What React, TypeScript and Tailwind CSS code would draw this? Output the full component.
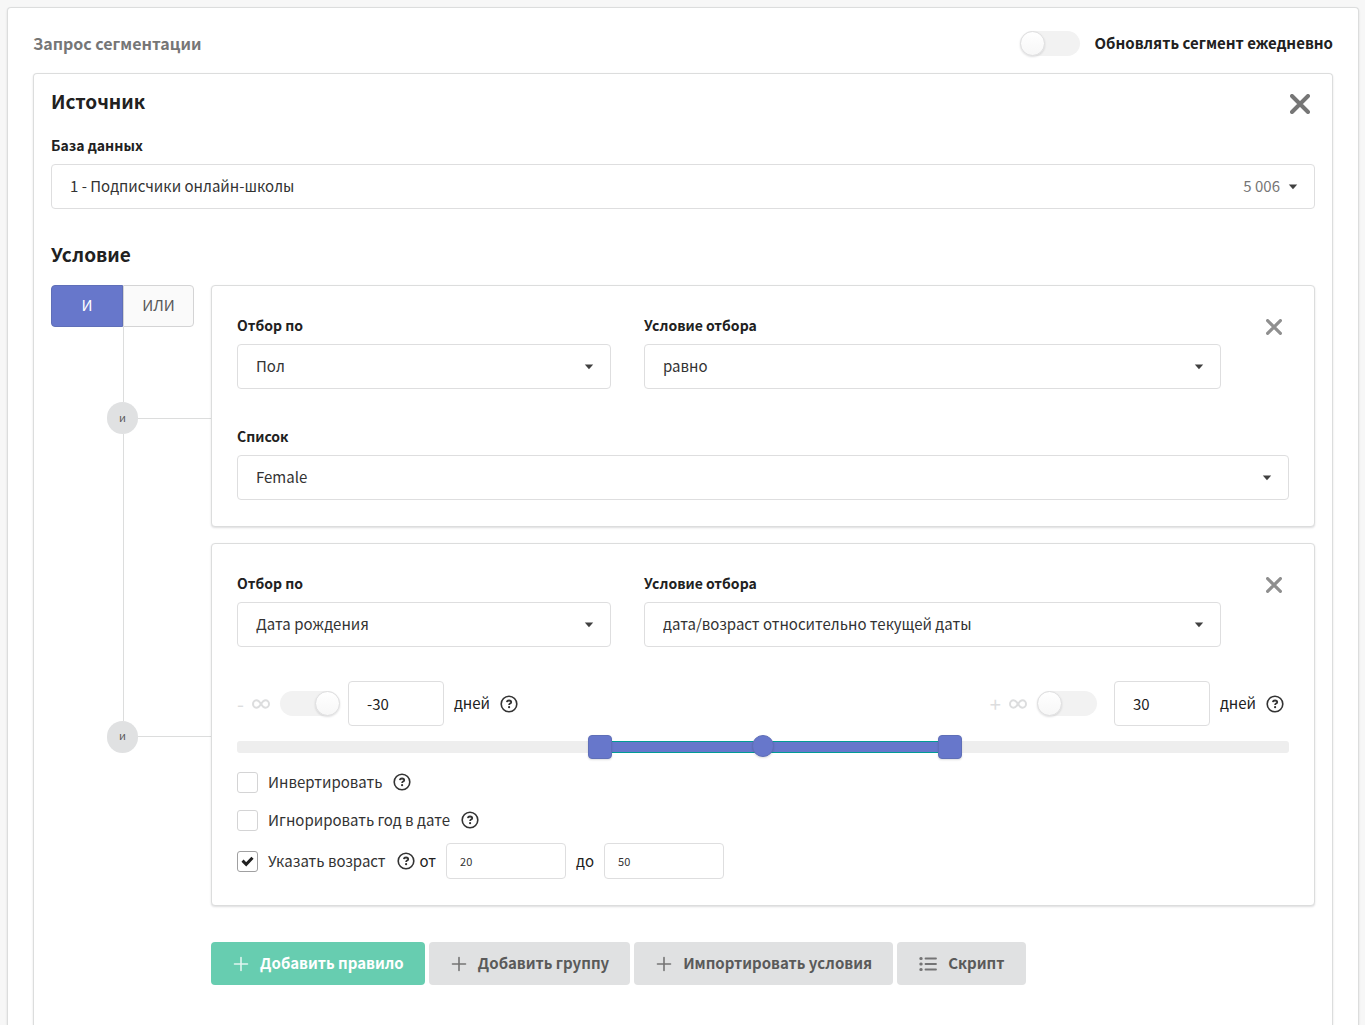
import { useState } from "react";
import type { ReactNode } from "react";

const DAYS_LIMIT = 90;

const thumb =
  "[&::-webkit-slider-thumb]:appearance-none [&::-webkit-slider-thumb]:pointer-events-auto [&::-webkit-slider-thumb]:cursor-pointer [&::-webkit-slider-thumb]:bg-[#6777cb] [&::-webkit-slider-thumb]:border [&::-webkit-slider-thumb]:border-[#5f6fb8] [&::-webkit-slider-thumb]:shadow-[0_1px_2px_rgba(34,36,38,0.15)]";
const squareThumb =
  "[&::-webkit-slider-thumb]:size-6 [&::-webkit-slider-thumb]:rounded";
const roundThumb =
  "[&::-webkit-slider-thumb]:size-[22px] [&::-webkit-slider-thumb]:rounded-full";

function CloseButton({ label, large }: { label: string; large?: boolean }) {
  return (
    <button
      aria-label={label}
      className={`flex w-[30px] items-center justify-center ${
        large ? "h-7 text-[#767676]" : "h-[22px] text-[#8f8f8f]"
      }`}
    >
      <svg
        viewBox="0 0 20 20"
        className={large ? "size-5 shrink-0" : "size-4 shrink-0"}
        fill="none"
        stroke="currentColor"
        strokeWidth="4"
        strokeLinecap="round"
      >
        <path d="M2 2l16 16M18 2L2 18" />
      </svg>
    </button>
  );
}

function HelpIcon() {
  return (
    <svg viewBox="0 0 18 18" className="size-[18px] shrink-0 text-[#333333]" fill="none" stroke="currentColor">
      <circle cx="9" cy="9" r="7.8" strokeWidth="1.6" />
      <path d="M6.8 7.2c.2-1.1 1-1.7 2.200-1.700s2.200.7 2.200 1.700c0 1.400-2.100 1.400-2.100 2.700" strokeWidth="1.8" />
      <circle cx="9.100" cy="12.200" r="1.100" fill="currentColor" stroke="none" />
    </svg>
  );
}

function PlusIcon() {
  return (
    <svg viewBox="0 0 16 16" className="size-4 shrink-0 opacity-80" fill="none" stroke="currentColor" strokeWidth="1.6" strokeLinecap="round">
      <path d="M8 1.500v13M1.500 8h13" />
    </svg>
  );
}

function ListIcon() {
  return (
    <svg viewBox="0 0 18 16" className="h-4 w-[18px] shrink-0 opacity-80" fill="none" stroke="currentColor" strokeWidth="1.8" strokeLinecap="round">
      <path d="M6.500 2.500h10.500M6.500 8h10.500M6.500 13.500h10.500" />
      <path d="M1.800 2.500h.4M1.800 8h.4M1.800 13.500h.4" strokeWidth="3" />
    </svg>
  );
}

type SelectProps = {
  id: string;
  label: string;
  options: string[];
  count?: string;
};

function SelectField({ id, label, options, count }: SelectProps) {
  return (
    <div>
      <label htmlFor={id} className="block text-sm leading-[18px] font-bold text-[#212121]">
        {label}
      </label>
      <div className="relative mt-[10px]">
        <select
          id={id}
          className="block h-[45px] w-full appearance-none rounded border border-[#dededf] bg-white pr-20 pl-[18px] text-[15px] text-[#333333]"
        >
          {options.map((o) => (
            <option key={o}>{o}</option>
          ))}
        </select>
        <div className="pointer-events-none absolute inset-y-0 right-[17px] flex items-center gap-2">
          {count && <span className="text-[15px] text-[#767676]">{count}</span>}
          <svg viewBox="0 0 10 6" className="h-[6px] w-[10px] text-[#404040]">
            <path d="M0.800 0.500h8.400L5 5.200z" fill="currentColor" />
          </svg>
        </div>
      </div>
    </div>
  );
}

function Toggle({ id, label, knobRight }: { id: string; label?: string; knobRight?: boolean }) {
  return (
    <span className="relative flex h-[25px] w-[60px] shrink-0 rounded-full bg-[#f2f2f2]">
      <input
        id={id}
        type="checkbox"
        role="switch"
        aria-label={label}
        className="absolute inset-0 size-full cursor-pointer opacity-0"
      />
      <span
        className={`pointer-events-none size-[25px] rounded-full border border-[#dededf] bg-linear-to-b from-white to-[#f7f7f7] shadow-[0_1px_2px_rgba(34,36,38,0.15)] ${
          knobRight ? "ml-auto" : ""
        }`}
      />
    </span>
  );
}

function Checkbox({ id, label, checked }: { id: string; label: string; checked?: boolean }) {
  return (
    <>
      <span className="relative mr-[10px] size-[21px] shrink-0">
        <input
          id={id}
          type="checkbox"
          defaultChecked={checked}
          className="peer block size-full appearance-none rounded-[3px] border border-[#d4d4d5] bg-white checked:border-[#a0a0a1]"
        />
        <svg
          viewBox="0 0 21 21"
          className="pointer-events-none absolute inset-0 hidden text-[#212121] peer-checked:block"
          fill="none"
          stroke="currentColor"
          strokeWidth="3"
        >
          <path d="M5.500 9.700l3.700 3.600 6.300-6.500" />
        </svg>
      </span>
      <label htmlFor={id} className="mr-[11px] text-[15px] text-[#333333]">
        {label}
      </label>
      <HelpIcon />
    </>
  );
}

// Circle with the operator and the line that leads to the rule card
function Node() {
  return (
    <div className="flex items-center">
      <span className="ml-14 flex h-8 w-[31px] items-center justify-center rounded-full bg-[#e0e1e2] pb-0.5 text-[11px] leading-none text-[#595959]">
        и
      </span>
      <span className="h-px flex-1 bg-[#dcdddd]" />
    </div>
  );
}

function RuleCard({ children }: { children: ReactNode }) {
  return (
    <div className="min-w-0 flex-1 rounded border border-[#dcdddd] bg-white px-[25px] pt-[30px] pb-[26px] shadow-[0_1px_2px_rgba(34,36,38,0.15)]">
      {children}
    </div>
  );
}

function RuleHead({ id, field, condition }: { id: string; field: string; condition: string }) {
  return (
    <div className="grid grid-cols-[374fr_577fr_35fr] gap-x-[33px]">
      <SelectField id={`${id}-field`} label="Отбор по" options={[field]} />
      <SelectField id={`${id}-condition`} label="Условие отбора" options={[condition]} />
      <div className="flex items-start justify-end">
        <CloseButton label="Удалить правило" />
      </div>
    </div>
  );
}

function RangeSlider() {
  const [from, setFrom] = useState(-30);
  const [to, setTo] = useState(30);
  const left = ((from + DAYS_LIMIT) / (2 * DAYS_LIMIT)) * 100;
  const right = 100 - ((to + DAYS_LIMIT) / (2 * DAYS_LIMIT)) * 100;

  return (
    <div className="relative mt-[9px] h-6">
      <div className="absolute inset-x-0 top-[6px] h-3 rounded-[3px] bg-[#eeeeee]" />
      <div
        className="absolute top-[6px] h-3 border-y border-[#009c95] bg-[#6777cb]"
        style={{ left: `calc(${left}% + 12px)`, right: `calc(${right}% - 12px)` }}
      />
      <input
        type="range"
        aria-label="Сдвиг"
        min={-DAYS_LIMIT}
        max={DAYS_LIMIT}
        defaultValue={0}
        className={`pointer-events-none absolute inset-x-0 top-0 h-[22px] w-full appearance-none bg-transparent ${thumb} ${roundThumb}`}
      />
      <div className="pointer-events-none absolute top-0 -right-6 left-0 h-6">
        <input
          type="range"
          aria-label="От"
          min={-DAYS_LIMIT}
          max={DAYS_LIMIT}
          value={from}
          onChange={(e) => setFrom(Math.min(Number(e.target.value), to))}
          className={`pointer-events-none absolute inset-0 h-6 w-full appearance-none bg-transparent ${thumb} ${squareThumb}`}
        />
        <input
          type="range"
          aria-label="До"
          min={-DAYS_LIMIT}
          max={DAYS_LIMIT}
          value={to}
          onChange={(e) => setTo(Math.max(Number(e.target.value), from))}
          className={`pointer-events-none absolute inset-0 h-6 w-full appearance-none bg-transparent ${thumb} ${squareThumb}`}
        />
      </div>
    </div>
  );
}

function Infinity({ sign }: { sign: string }) {
  return (
    <span className="flex items-center gap-2 text-xl leading-none text-[#dcddde]">
      {sign}
      <svg viewBox="0 0 18 12" className="h-3 w-[18px]" fill="none" stroke="currentColor" strokeWidth="2">
        <path d="M9 6C7.500 3.500 6.200 2.200 4.500 2.200a3.500 3.800 0 0 0 0 7.600C6.200 9.800 7.500 8.500 9 6s2.800-3.800 4.500-3.800a3.500 3.800 0 0 1 0 7.600C11.800 9.800 10.500 8.500 9 6z" />
      </svg>
    </span>
  );
}

const dayInput =
  "h-[45px] w-24 rounded border border-[#dededf] bg-white px-[18px] text-[15px] text-[#212121]";
const ageInput =
  "mx-[10px] h-9 w-[120px] rounded border border-[#dededf] bg-white px-[13px] text-[11px] text-[#333333]";
const grayButton =
  "flex h-[43px] items-center gap-[11px] rounded bg-[#e0e1e2] pr-[21px] pl-[22px] text-[15px] font-bold text-[#5a5a5a]";

export default function App() {
  return (
    <main className="flex min-h-screen bg-[#f7f7f7] pt-[7px] pr-[6px] pl-[7px] font-['Source_Sans_Pro','Noto_Sans_CJK_SC',sans-serif] text-[15px] text-[#212121]">
      <div className="min-w-0 flex-1 rounded-t border border-b-0 border-[#dcdddd] bg-white shadow-[0_1px_2px_rgba(34,36,38,0.15)]">
        <div className="flex h-full flex-col px-[25px] pt-[7px]">
          <div className="flex h-[58px] items-center justify-between pb-0.5">
            <h1 className="text-base font-bold text-[#767676]">Запрос сегментации</h1>
            <div className="flex items-center gap-[14px]">
              <Toggle id="daily-update" />
              <label htmlFor="daily-update" className="text-[15px] font-bold">
                Обновлять сегмент ежедневно
              </label>
            </div>
          </div>

          <section className="flex-1 rounded-t border border-b-0 border-[#dcdddd] px-[17px] pt-4 pb-10 shadow-[0_1px_2px_rgba(34,36,38,0.15)]">
            <div className="mb-[18px] flex items-start justify-between">
              <h2 className="text-[19px] leading-[22px] font-bold">Источник</h2>
              <CloseButton label="Удалить источник" large />
            </div>
            <SelectField id="database" label="База данных" options={["1 - Подписчики онлайн-школы"]} count="5 006" />

            <h2 className="mt-[34px] mb-5 text-[19px] leading-[22px] font-bold">Условие</h2>

            {/* Rule 1 */}
            <div className="flex">
              <div className="flex w-40 shrink-0 flex-col">
                <div className="flex h-[42px] w-[143px]">
                  <button className="w-[72px] rounded-l border border-[#5f6fb8] bg-[#6777cb] pb-0.5 text-[15px] text-white">И</button>
                  <button className="flex-1 rounded-r border border-[#d4d4d5] bg-[#fafafa] pb-0.5 text-[15px] text-[#595959]">ИЛИ</button>
                </div>
                <span className="ml-[72px] w-px flex-1 bg-[#dcdddd]" />
                <Node />
                <span className="ml-[72px] w-px flex-1 basis-[34px] bg-[#dcdddd]" />
              </div>
              <div className="flex min-w-0 flex-1 pb-4">
                <RuleCard>
                  <RuleHead id="rule-1" field="Пол" condition="равно" />
                  <div className="mt-[38px]">
                    <SelectField id="rule-1-list" label="Список" options={["Female"]} />
                  </div>
                </RuleCard>
              </div>
            </div>

            {/* Rule 2 */}
            <div className="flex">
              <div className="flex w-40 shrink-0 flex-col">
                <span className="ml-[72px] w-px flex-1 basis-6 bg-[#dcdddd]" />
                <Node />
                <span className="flex-1" />
              </div>
              <RuleCard>
                <RuleHead id="rule-2" field="Дата рождения" condition="дата/возраст относительно текущей даты" />

                <div className="mt-[34px] flex justify-between">
                  <div className="flex items-center">
                    <Infinity sign="-" />
                    <span className="mr-2 ml-[10px] flex">
                      <Toggle id="minus-infinity" label="Минус бесконечность" knobRight />
                    </span>
                    <input id="days-from" defaultValue="-30" className={dayInput} />
                    <label htmlFor="days-from" className="mx-[10px]">дней</label>
                    <HelpIcon />
                  </div>
                  <div className="flex items-center pr-[5px]">
                    <Infinity sign="+" />
                    <span className="mr-[17px] ml-[10px] flex">
                      <Toggle id="plus-infinity" label="Плюс бесконечность" />
                    </span>
                    <input id="days-to" defaultValue="30" className={dayInput} />
                    <label htmlFor="days-to" className="mx-[10px]">дней</label>
                    <HelpIcon />
                  </div>
                </div>

                <RangeSlider />

                <div className="mt-1 flex h-[38px] items-center">
                  <Checkbox id="invert" label="Инвертировать" />
                </div>
                <div className="flex h-[38px] items-center">
                  <Checkbox id="ignore-year" label="Игнорировать год в дате" />
                </div>
                <div className="mt-1 flex items-center">
                  <Checkbox id="use-age" label="Указать возраст" checked />
                  <label htmlFor="age-from" className="ml-[5px]">от</label>
                  <input id="age-from" defaultValue="20" className={ageInput} />
                  <label htmlFor="age-to">до</label>
                  <input id="age-to" defaultValue="50" className={ageInput} />
                </div>
              </RuleCard>
            </div>

            <div className="mt-9 ml-40 flex flex-wrap gap-1">
              <button className="flex h-[43px] items-center gap-[11px] rounded bg-[#67cdb0] pr-[21px] pl-[22px] text-[15px] font-bold text-white">
                <PlusIcon />
                Добавить правило
              </button>
              <button className={grayButton}>
                <PlusIcon />
                Добавить группу
              </button>
              <button className={grayButton}>
                <PlusIcon />
                Импортировать условия
              </button>
              <button className={grayButton}>
                <ListIcon />
                Скрипт
              </button>
            </div>
          </section>
        </div>
      </div>
    </main>
  );
}
